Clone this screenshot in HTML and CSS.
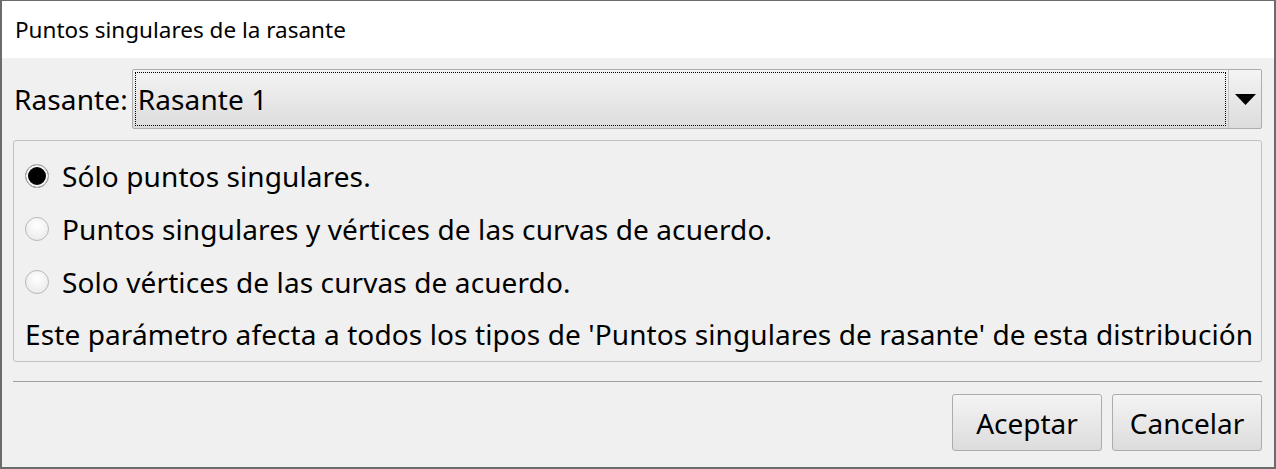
FILE: index.html
```html
<!DOCTYPE html>
<html lang="es">
<head>
  <meta charset="UTF-8">
  <title>Puntos singulares de la rasante</title>
  <link rel="stylesheet" href="styles.css">
</head>
<body>
<div class="ventana">
  <div class="titulo">Puntos singulares de la rasante</div>

  <div class="contenido">
    <div class="fila-rasante">
      <label class="etiqueta" for="rasante">Rasante:</label>
      <div class="combo" id="rasante">
        <div class="combo-valor"><span>Rasante 1</span></div>
        <div class="combo-boton">
          <svg width="21" height="11" viewBox="0 0 21 11"><polygon points="0,0 21,0 10.5,11" fill="#000"/></svg>
        </div>
      </div>
    </div>

    <div class="grupo">
      <div class="opcion">
        <span class="radio marcado"></span>
        <span>Sólo puntos singulares.</span>
      </div>
      <div class="opcion">
        <span class="radio"></span>
        <span>Puntos singulares y vértices de las curvas de acuerdo.</span>
      </div>
      <div class="opcion">
        <span class="radio"></span>
        <span>Solo vértices de las curvas de acuerdo.</span>
      </div>
      <div class="nota">Este parámetro afecta a todos los tipos de 'Puntos singulares de rasante' de esta distribución</div>
    </div>

    <hr class="separador">

    <div class="botones">
      <button class="boton">Aceptar</button>
      <button class="boton">Cancelar</button>
    </div>
  </div>
</div>
</body>
</html>
```

FILE: styles.css
```css
body { margin: 0; background: #6b6b6b; font-family: "Segoe UI", "Noto Sans", sans-serif; color: #000; }

.ventana { width: 1272px; height: 466px; border-left: 2px solid #6b6b6b; border-right: 2px solid #6b6b6b; border-top: 1px solid #6b6b6b; border-bottom: 2px solid #6b6b6b; background: #f0f0f0; display: flex; flex-direction: column; }

.titulo { background: #fff; height: 57px; padding-left: 13px; font-size: 22.5px; line-height: 57px; }

.contenido { padding: 11px 12px 0 10px; font-size: 28px; letter-spacing: 0.1px; }

/* fila con la etiqueta y el desplegable */
.fila-rasante { display: flex; align-items: center; gap: 4px; height: 60px; }
.etiqueta { padding-left: 2px; }
.combo { flex: 1; display: flex; height: 58px; border: 1px solid #adadad; border-radius: 2px; background: linear-gradient(#f4f4f4, #dcdcdc); }
.combo-valor { flex: 1; padding: 2px; display: flex; }
.combo-valor span { flex: 1; border: 1px dotted #000; padding-left: 2px; display: flex; align-items: center; }
.combo-boton { width: 32px; border-left: 1px solid #c4c4c4; display: flex; align-items: center; justify-content: center; }

/* caja de opciones */
.grupo { margin-top: 11px; height: 220px; border: 1px solid #c2c2c2; border-radius: 3px; margin-left: 1px; padding: 0 0 0 11px; display: flex; flex-direction: column; }
.opcion { display: flex; align-items: center; gap: 13px; height: 53px; }
.opcion:first-child { margin-top: 8px; }
.radio { width: 22px; height: 22px; border: 1px solid #b8b8b8; border-radius: 50%; background: radial-gradient(circle at 50% 35%, #ffffff, #e6e6e6); flex: none; }
.radio.marcado { background: #000; box-shadow: inset 0 0 0 2px #f6f6f6; }
.nota { height: 52px; line-height: 52px; }

.separador { border: none; border-top: 1px solid #a0a0a0; margin: 19px 0 0 1px; }

.botones { display: flex; justify-content: flex-end; gap: 10px; margin-top: 12px; }
.boton { width: 150px; height: 57px; border: 1px solid #acacac; border-radius: 3px; background: linear-gradient(#f4f4f4, #dcdcdc); font: inherit; color: #000; padding: 0; }
```
